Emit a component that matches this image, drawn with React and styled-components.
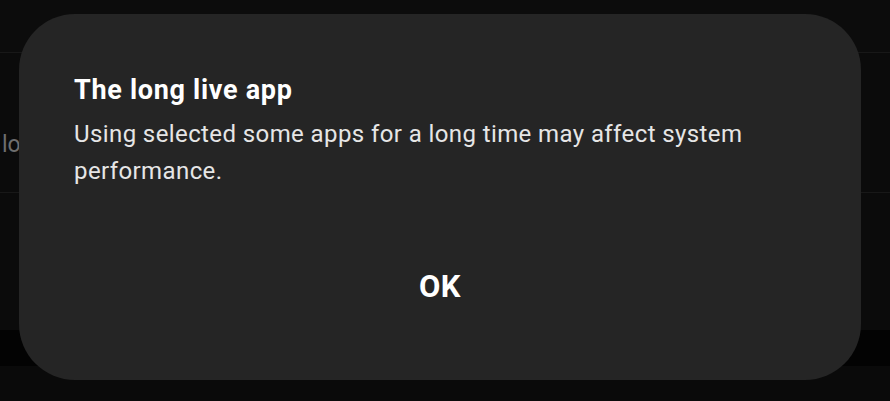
import React from 'react';
import styled, { createGlobalStyle } from 'styled-components';

const GlobalStyle = createGlobalStyle`
  html, body {
    margin: 0;
    padding: 0;
    background: #0b0b0b;
  }
  body {
    font-family: Roboto, "Noto Sans", "Liberation Sans", sans-serif;
  }
`;

const Screen = styled.div`
  position: relative;
  width: 890px;
  height: 401px;
  overflow: hidden;
  background: #0b0b0b;
  display: flex;
  flex-direction: column;
`;

const Band = styled.div`
  height: ${p => p.h}px;
  flex: none;
  background: ${p => p.bg || '#0b0b0b'};
  border-bottom: ${p => (p.line ? '1px solid #181818' : 'none')};
  display: flex;
  align-items: flex-start;
  box-sizing: border-box;
  padding-top: ${p => p.pt || 0}px;
`;

const RowLabel = styled.span`
  font-size: 23px;
  line-height: 30px;
  color: #6e6e6e;
  padding-left: 2px;
  white-space: nowrap;
`;

const Dialog = styled.div`
  position: absolute;
  left: 19px;
  top: 14px;
  width: 842px;
  height: 366px;
  border-radius: 56px;
  background: #252525;
  box-sizing: border-box;
  padding: 60px 55px 0 55px;
  display: flex;
  flex-direction: column;
`;

const Title = styled.h2`
  margin: 0;
  font-size: 27px;
  font-weight: 700;
  letter-spacing: 0.7px;
  color: #ffffff;
  line-height: 32px;
`;

const Message = styled.p`
  margin: 10px 0 0 0;
  font-size: 24px;
  letter-spacing: 0.4px;
  line-height: 37px;
  color: #e6e6e6;
  max-width: 720px;
`;

const Actions = styled.div`
  margin-top: 79px;
  display: flex;
  justify-content: center;
`;

const OkButton = styled.button`
  background: none;
  border: none;
  padding: 0;
  font-family: inherit;
  font-size: 31px;
  font-weight: 700;
  letter-spacing: 0.5px;
  color: #ffffff;
  line-height: 36px;
  cursor: pointer;
`;

export default function App() {
  return (
    <>
      <GlobalStyle />
      <Screen>
        <Band h={53} bg="#0c0c0c" line />
        <Band h={140} line pt={77}>
          <RowLabel>lo</RowLabel>
        </Band>
        <Band h={137} />
        <Band h={36} bg="#030303" />
        <Band h={35} bg="#0a0a0a" />
        <Dialog>
          <Title>The long live app</Title>
          <Message>
            Using selected some apps for a long time may affect system performance.
          </Message>
          <Actions>
            <OkButton>OK</OkButton>
          </Actions>
        </Dialog>
      </Screen>
    </>
  );
}
